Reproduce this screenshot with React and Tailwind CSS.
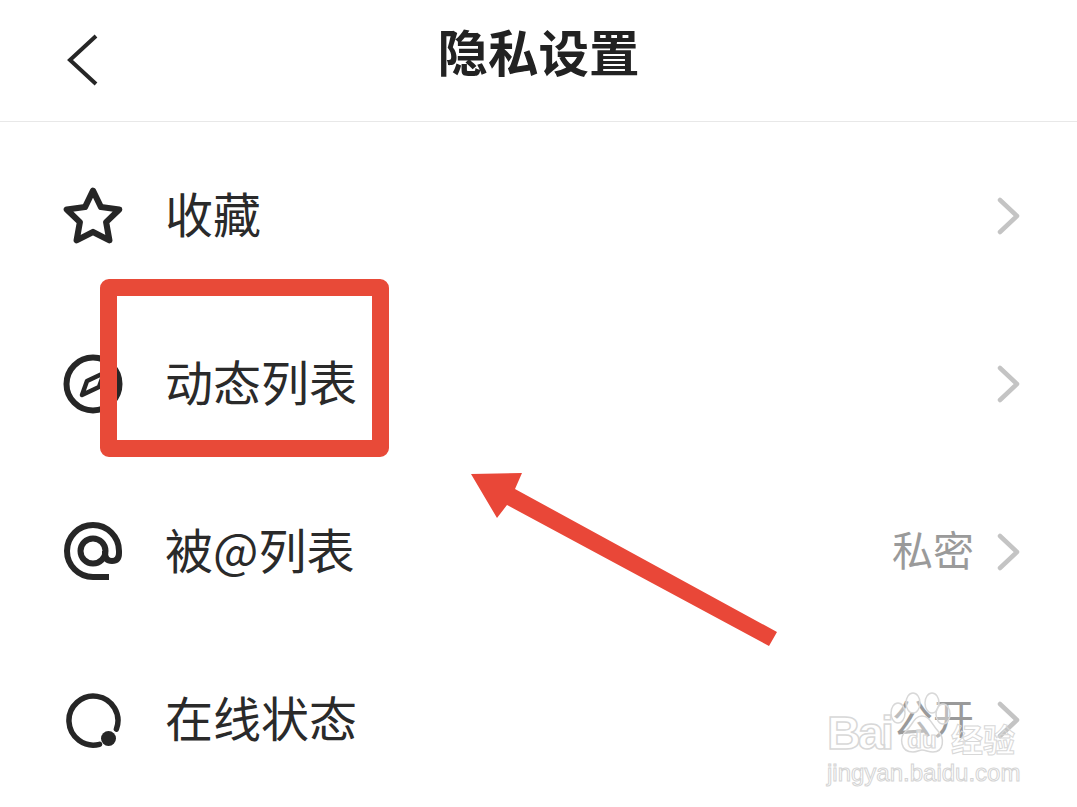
import React from "react";

const FONT = "font-['Noto_Sans_CJK_SC','Noto_Sans',sans-serif]";
const LATIN = "font-['Liberation_Sans',sans-serif]";

const StarIcon = () => (
  <svg width="62" height="60" viewBox="0 0 64 62" fill="none" stroke="#262626" strokeWidth="6.5" strokeLinejoin="round">
    <path d="M32 4 L40.5 21.5 L60 24 L46 37.5 L49.5 57 L32 48 L14.5 57 L18 37.5 L4 24 L23.5 21.5 Z" />
  </svg>
);

const CompassIcon = () => (
  <svg width="60" height="60" viewBox="0 0 60 60" fill="none" stroke="#262626" strokeLinejoin="round">
    <circle cx="30" cy="30" r="26.5" strokeWidth="6" />
    <path d="M19 41 L24 27 L41 19 L36 33 Z" strokeWidth="4.5" />
  </svg>
);

const AtIcon = () => (
  <svg width="60" height="60" viewBox="0 0 60 60" fill="none" stroke="#262626" strokeWidth="6">
    <path d="M46 55 H30 A26 26 0 1 1 56 29 V31 Q56 39 49 39 Q42 39 42 31 V29" />
    <circle cx="30" cy="29" r="12.5" />
  </svg>
);

const OnlineIcon = () => (
  <svg width="55" height="55" viewBox="0 0 55 55" fill="none">
    <path d="M50.4 36.1 A24.5 24.5 0 1 0 33.5 51.3" stroke="#262626" strokeWidth="5.5" strokeLinecap="round" />
    <circle cx="42.5" cy="45.5" r="7.5" fill="#262626" />
  </svg>
);

const Chevron = () => (
  <svg width="24" height="38" viewBox="0 0 24 38" fill="none" stroke="#c4c4c4" strokeWidth="4.5" strokeLinecap="round" strokeLinejoin="round">
    <path d="M3 3 L20 19 L3 35" />
  </svg>
);

const Row = ({ icon, label, value }) => (
  <div className="h-[168px] flex items-center pl-[63px] pr-[56px]">
    <div className="w-[60px] flex justify-center shrink-0">{icon}</div>
    <div className="ml-[42px] flex-1 pb-[8px] text-[48px] leading-none text-[#2a2a2a]">{label}</div>
    {value && <div className="pb-[8px] text-[41px] leading-none text-[#9a9a9a] mr-[23px]">{value}</div>}
    <Chevron />
  </div>
);

export default function App() {
  return (
    <div className={`relative w-[1077px] h-[807px] overflow-hidden bg-white ${FONT}`}>
      {/* Header */}
      <header className="h-[122px] border-b border-[#e8e8e8] relative flex items-center justify-center pb-[20px]">
        <svg className="absolute left-[66px] top-[33px]" width="34" height="54" viewBox="0 0 34 54" fill="none" stroke="#262626" strokeWidth="4">
          <path d="M30 3 L4 27 L30 51" />
        </svg>
        <h1 className="text-[50.5px] leading-none font-bold text-[#222]">隐私设置</h1>
      </header>

      {/* List */}
      <div className="pt-[10px]">
        <Row icon={<StarIcon />} label="收藏" />
        <Row icon={<CompassIcon />} label="动态列表" />
        <Row icon={<AtIcon />} label="被@列表" value="私密" />
        <Row icon={<OnlineIcon />} label="在线状态" value="公开" />
      </div>

      {/* Red annotation box */}
      <div className="absolute left-[100px] top-[279px] w-[289px] h-[178px] border-[17px] border-[#e84a38] rounded-[9px]" />

      {/* Red arrow */}
      <svg className="absolute left-0 top-0 pointer-events-none" width="1077" height="807" viewBox="0 0 1077 807">
        <path d="M471 474 L522 473 L515 489 L777 632 L769 646 L507 505 L497 518 Z" fill="#e94738" />
      </svg>

      {/* Baidu watermark */}
      <div className="absolute left-[827px] top-[692px] w-[194px] flex flex-col pointer-events-none">
        <div className="flex items-end h-[64px] whitespace-nowrap">
          <span className={`${LATIN} w-[62px] text-[47px] leading-none tracking-[-3px] font-bold text-transparent [-webkit-text-stroke:1.5px_#d8d8d8]`}>Bai</span>
          <svg className="shrink-0" width="62" height="64" viewBox="0 0 62 64" fill="rgba(255,255,255,0.35)" stroke="#d8d8d8" strokeWidth="1.5">
            <ellipse cx="9" cy="21" rx="7" ry="10" />
            <ellipse cx="24" cy="11" rx="7" ry="10" />
            <ellipse cx="43" cy="11" rx="7" ry="10" />
            <ellipse cx="54" cy="22" rx="7" ry="10" />
            <path d="M33 24 C25 24 23 34 17 39 C10 45 11 60 24 60 C29 60 30 58 33 58 C37 58 39 60 44 60 C55 60 56 46 49 39 C43 33 41 24 33 24 Z" />
            <text x="33" y="56" textAnchor="middle" fontSize="24" fontWeight="700" fontFamily="Liberation Sans" fill="rgba(255,255,255,0.5)" strokeWidth="1.2">du</text>
          </svg>
          <span className="pb-[2px] text-[32px] leading-none font-bold text-transparent [-webkit-text-stroke:1px_#d8d8d8]">经验</span>
        </div>
        <span className={`${LATIN} mt-[5px] text-[24px] leading-none whitespace-nowrap text-transparent [-webkit-text-stroke:1px_#d4d4d4]`}>jingyan.baidu.com</span>
      </div>
    </div>
  );
}
